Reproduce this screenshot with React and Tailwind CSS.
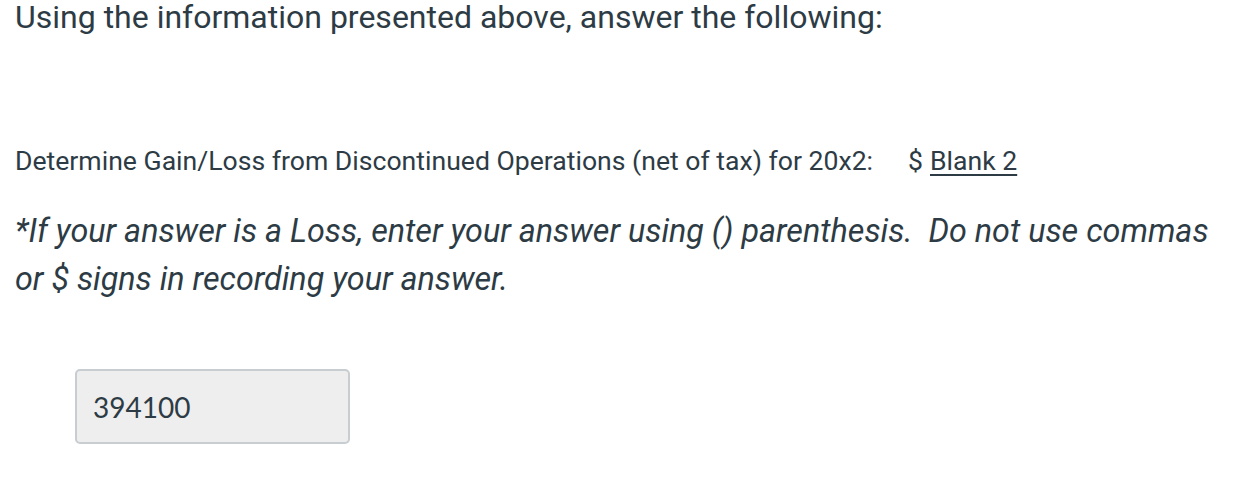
import React from 'react';

const App = () => {
  return (
    <div className="w-[1250px] h-[490px] bg-white overflow-hidden text-[#2d3b45] font-['Roboto',sans-serif] pl-[15px]">
      <p className="text-[32px] leading-[34px] whitespace-nowrap">
        Using the information presented above, answer the following:
      </p>

      <div className="mt-[111px] flex items-baseline text-[26.6px] leading-[32px]">
        <span>Determine Gain/Loss from Discontinued Operations (net of tax) for 20x2:</span>
        <span className="ml-[35px]">$</span>
        <span className="ml-[7px] underline underline-offset-[4px] decoration-[1.5px]">Blank 2</span>
      </div>

      <p className="mt-[30px] text-[32.3px] leading-[48px] italic pr-[20px]">
        *If your answer is a Loss, enter your answer using () parenthesis.&nbsp; Do not use commas or $ signs in recording your answer.
      </p>

      <div className="mt-[66px] ml-[60px] w-[275px] h-[75px] bg-[#eeeeee] border-2 border-[#c7cdd1] rounded-[5px] flex items-center px-[16px] font-['Lato',sans-serif] text-[28px] text-[#2d3b45]">
        394100
      </div>
    </div>
  );
};

export default App;
